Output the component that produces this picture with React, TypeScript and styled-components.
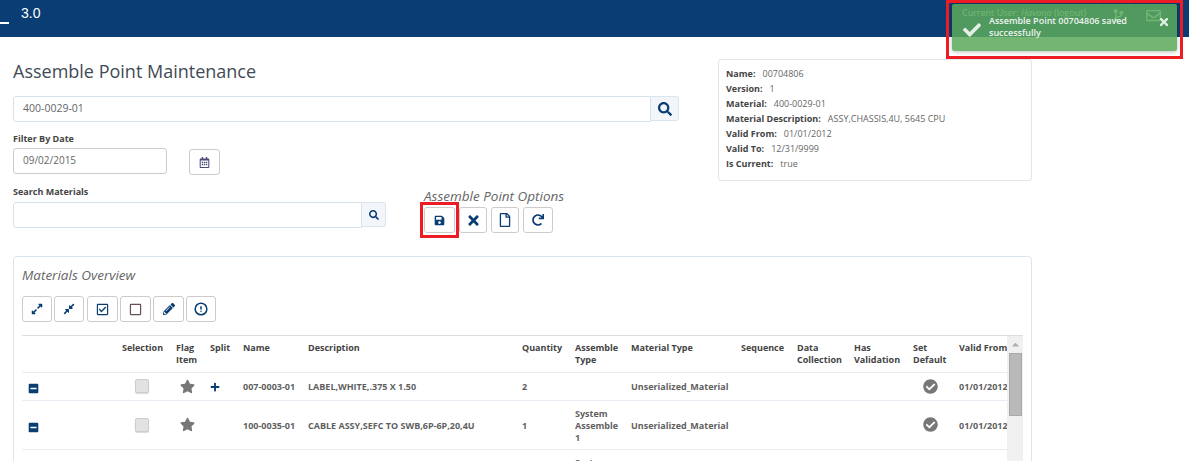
import React from "react"
import styled, { createGlobalStyle } from 'styled-components'
import {
    FaSearch, FaRegCalendarAlt, FaSave, FaTimes, FaRegFile, FaRedo, FaExpandAlt, FaCompressAlt,
    FaRegCheckSquare, FaRegSquare, FaPencilAlt, FaMinusSquare, FaStar, FaPlus, FaCheckCircle,
    FaCheck, FaCodeBranch, FaRegEnvelope, FaCaretUp
} from 'react-icons/fa'
import { FiAlertCircle } from 'react-icons/fi'

const navy = '#0a3d73'

const GlobalStyle = createGlobalStyle`
  html, body {
    margin: 0;
    background: #fff;
    overflow: hidden;
    font-family: "Open Sans", "Liberation Sans", sans-serif;
    color: #555;
  }
`

const Page = styled.div`
  position: relative;
  height: 461px;
  overflow: hidden;
`

const Header = styled.header`
  height: 37px;
  background: ${navy};
  display: flex;
  align-items: flex-start;
`

const MenuBar = styled.span`
  width: 9px;
  height: 2px;
  margin-top: 22px;
  background: #fff;
`

const Version = styled.span`
  margin: 5px 0 0 12px;
  font: 14px/16px "Liberation Sans", sans-serif;
  color: #fff;
`

const UserArea = styled.div`
  margin-left: auto;
  width: 228px;
  height: 30px;
  display: flex;
  align-items: center;
  color: #fff;
  font-size: 9px;
`

const UserName = styled.span`
  width: 141px;
  padding-left: 1px;
  box-sizing: border-box;
  margin-top: -5px;
  white-space: nowrap;
  em { font-style: italic; }
`

const HeaderCell = styled.span<{ $w: number; $size: number }>`
  width: ${p => p.$w}px;
  height: 30px;
  display: flex;
  align-items: center;
  justify-content: center;
  border-left: 1px solid #062c54;
  font-size: ${p => p.$size}px;
`

const Toast = styled.div`
  position: absolute;
  top: 4px;
  left: 952px;
  width: 225px;
  height: 47px;
  box-sizing: border-box;
  padding: 11px 7px 0 11px;
  display: flex;
  align-items: flex-start;
  border-radius: 2px;
  background: rgba(92, 170, 92, 0.86);
  box-shadow: 0 1px 4px rgba(0, 0, 0, 0.25);
  color: #eef4ee;
  font-size: 9px;
  font-weight: 600;
  line-height: 12px;
`

const ToastCheck = styled.span`
  width: 26px;
  margin-top: 6px;
  font-size: 18px;
  line-height: 18px;
  color: #e6efe6;
`

const ToastText = styled.span`
  flex: 1;
`

const ToastClose = styled.span`
  margin-top: 1px;
  font-size: 12px;
  color: #e6efe6;
`

const RedBox = styled.div<{ $left: number; $top: number; $w: number; $h: number }>`
  position: absolute;
  left: ${p => p.$left}px;
  top: ${p => p.$top}px;
  width: ${p => p.$w}px;
  height: ${p => p.$h}px;
  box-sizing: border-box;
  border: 3px solid #ed1c24;
  pointer-events: none;
`

const Top = styled.section`
  display: flex;
  padding: 22px 0 0 13px;
  height: 219px;
  box-sizing: border-box;
`

const LeftColumn = styled.div`
  width: 666px;
`

const Title = styled.h1`
  margin: 0 0 12px;
  height: 25px;
  font-size: 18px;
  line-height: 25px;
  font-weight: 400;
  color: #414b55;
`

const InputRow = styled.div`
  display: flex;
  align-items: flex-start;
`

const TextBox = styled.div<{ $w: number; $grey?: boolean; $size?: number }>`
  width: ${p => p.$w}px;
  height: 26px;
  box-sizing: border-box;
  padding-left: 9px;
  border: 1px solid ${p => (p.$grey ? '#ccc' : '#d5e2ec')};
  border-radius: ${p => (p.$grey ? '3px' : '3px 0 0 3px')};
  background: #fff;
  font-size: ${p => p.$size ?? 10}px;
  line-height: 23px;
  color: #666;
`

const AddOn = styled.button<{ $w: number; $size: number }>`
  width: ${p => p.$w}px;
  height: 25px;
  padding: 0;
  display: flex;
  align-items: center;
  justify-content: center;
  border: 1px solid #dbe5ee;
  border-left: none;
  border-radius: 0 3px 3px 0;
  background: #f2f5fa;
  color: ${navy};
  font-size: ${p => p.$size}px;
`

const FieldLabel = styled.label<{ $mb: number }>`
  display: block;
  height: 12px;
  margin: 11px 0 ${p => p.$mb}px;
  font-size: 9px;
  line-height: 12px;
  font-weight: 700;
  color: #444;
`

const ToolButton = styled.button<{ $w?: number; $size?: number; $color?: string }>`
  width: ${p => p.$w ?? 30}px;
  height: 26px;
  padding: 0;
  display: flex;
  align-items: center;
  justify-content: center;
  border: 1px solid #ccc;
  border-radius: 3px;
  background: #fff;
  color: ${p => p.$color ?? navy};
  font-size: ${p => p.$size ?? 12}px;
`

const CalendarButton = styled(ToolButton)`
  margin: 1px 0 0 22px;
`

const SearchRow = styled.div`
  display: flex;
`

const SearchColumn = styled.div`
  width: 411px;
`

const OptionsColumn = styled.div`
  padding-top: 12px;
`

const SectionTitle = styled.div`
  font-size: 13.5px;
  font-style: italic;
  line-height: 19px;
  color: #666;
`

const OptionTools = styled.div`
  display: flex;
  gap: 4px;
  margin-top: 1px;
`

const InfoCard = styled.aside`
  margin-left: 39px;
  width: 314px;
  height: 122px;
  box-sizing: border-box;
  padding: 6px 7px 0;
  border: 1px solid #dfe6ec;
  border-radius: 3px;
  align-self: flex-start;
  font-size: 9px;
  line-height: 15px;
  color: #666;
`

const InfoRow = styled.div`
  b {
    font-weight: 700;
    color: #444;
    margin-right: 7px;
  }
`

const Panel = styled.section`
  margin-left: 13px;
  width: 1019px;
  height: 240px;
  box-sizing: border-box;
  padding: 9px 8px 0;
  border: 1px solid #dbe5ee;
  border-radius: 4px;
`

const Actions = styled.div`
  display: flex;
  gap: 2.3px;
  margin: 11px 0 13px;
`

const TableWrap = styled.div`
  display: flex;
  border-top: 1px solid #ddd;
`

const Table = styled.table`
  width: 985px;
  table-layout: fixed;
  border-collapse: collapse;
  font-size: 9px;
  line-height: 12px;
  color: #5f5f5f;
`

const Th = styled.th`
  height: 36px;
  box-sizing: border-box;
  padding: 6px 0 0;
  text-align: left;
  vertical-align: top;
  font-weight: 700;
  color: #444;
  border-bottom: 1px solid #e8eef3;
`

// $top moves the cell's content up or down inside the same 12px of padding
const Td = styled.td<{ $indent?: number; $top?: number }>`
  padding: ${p => p.$top ?? 7}px 0 ${p => 12 - (p.$top ?? 7)}px ${p => p.$indent ?? 0}px;
  vertical-align: middle;
  font-weight: 700;
  white-space: pre-line;
  overflow: hidden;
  border-bottom: 1px solid #e8eef3;
`

const RowIcon = styled.span<{ $size: number; $color: string }>`
  display: inline-flex;
  vertical-align: middle;
  font-size: ${p => p.$size}px;
  color: ${p => p.$color};
`

const CheckBox = styled.span`
  display: inline-block;
  width: 14px;
  height: 14px;
  box-sizing: border-box;
  vertical-align: middle;
  border: 1px solid #ccc;
  border-radius: 2px;
  background: #e2e2e2;
  box-shadow: 0 1px 1px rgba(0, 0, 0, 0.15);
`

const ScrollBar = styled.div`
  width: 17px;
  height: 130px;
  background: #f0f0f0;
  display: flex;
  flex-direction: column;
  align-items: center;
`

const ScrollArrow = styled.div`
  height: 17px;
  color: #b0b0b0;
  font-size: 11px;
  display: flex;
  align-items: center;
`

const ScrollThumb = styled.div`
  width: 13px;
  height: 63px;
  box-sizing: border-box;
  background: #b9b9b9;
  border: 1px solid #a9a9a9;
`

const columns = [100, 54, 34, 33, 65, 214, 53, 56, 110, 56, 57, 59, 46, 48]

const headings = ['', 'Selection', 'Flag Item', 'Split', 'Name', 'Description', 'Quantity', 'Assemble Type',
    'Material Type', 'Sequence', 'Data Collection', 'Has Validation', 'Set Default', 'Valid\u00a0From']

const rows = [
    { name: '007-0003-01', description: 'LABEL,WHITE,.375 X 1.50', quantity: '2', type: '', material: 'Unserialized_Material', valid: '01/01/2012', split: true },
    { name: '100-0035-01', description: 'CABLE ASSY,SEFC TO SWB,6P-6P,20,4U', quantity: '1', type: 'System\nAssemble\n1', material: 'Unserialized_Material', valid: '01/01/2012', split: false },
    // only the top of this row's type shows above the fold
    { name: '', description: '', quantity: '', type: 'System\nAssemble\n1', material: '', valid: '', split: false },
]

const info = [
    ['Name:', '00704806'],
    ['Version:', '1'],
    ['Material:', '400-0029-01'],
    ['Material Description:', 'ASSY,CHASSIS,4U, 5645 CPU'],
    ['Valid From:', '01/01/2012'],
    ['Valid To:', '12/31/9999'],
    ['Is Current:', 'true'],
]

const App = () => {
    return (
        <Page>
            <GlobalStyle />
            <Header>
                <MenuBar />
                <Version>3.0</Version>
                <UserArea>
                    <UserName>Current User: <em>Havana</em> (logout)</UserName>
                    <HeaderCell $w={31} $size={13}><FaCodeBranch /></HeaderCell>
                    <HeaderCell $w={36} $size={15}><FaRegEnvelope /></HeaderCell>
                </UserArea>
            </Header>

            <Top>
                <LeftColumn>
                    <Title>Assemble Point Maintenance</Title>
                    <InputRow>
                        <TextBox $w={638} $size={10.5}>400-0029-01</TextBox>
                        <AddOn $w={28} $size={14}><FaSearch /></AddOn>
                    </InputRow>
                    <FieldLabel $mb={3}>Filter By Date</FieldLabel>
                    <InputRow>
                        <TextBox $w={154} $grey>09/02/2015</TextBox>
                        <CalendarButton $w={31} $size={11} $color="#4a4a7a"><FaRegCalendarAlt /></CalendarButton>
                    </InputRow>
                    <SearchRow>
                        <SearchColumn>
                            <FieldLabel $mb={4}>Search Materials</FieldLabel>
                            <InputRow>
                                <TextBox $w={349} />
                                <AddOn $w={24} $size={10}><FaSearch /></AddOn>
                            </InputRow>
                        </SearchColumn>
                        <OptionsColumn>
                            <SectionTitle>Assemble Point Options</SectionTitle>
                            <OptionTools>
                                <ToolButton $w={31} $size={11}><FaSave /></ToolButton>
                                <ToolButton $w={28} $size={15}><FaTimes /></ToolButton>
                                <ToolButton $w={28} $size={14}><FaRegFile /></ToolButton>
                                <ToolButton $w={30} $size={12}><FaRedo /></ToolButton>
                            </OptionTools>
                        </OptionsColumn>
                    </SearchRow>
                </LeftColumn>
                <InfoCard>
                    {info.map(([label, value]) => (
                        <InfoRow key={label}><b>{label}</b>{value}</InfoRow>
                    ))}
                </InfoCard>
            </Top>

            <Panel>
                <SectionTitle>Materials Overview</SectionTitle>
                <Actions>
                    <ToolButton $size={12}><FaExpandAlt /></ToolButton>
                    <ToolButton $size={12}><FaCompressAlt /></ToolButton>
                    <ToolButton $w={31} $size={13}><FaRegCheckSquare /></ToolButton>
                    <ToolButton $w={31} $size={13} $color="#6a4f55"><FaRegSquare /></ToolButton>
                    <ToolButton $w={31} $size={12}><FaPencilAlt /></ToolButton>
                    <ToolButton $size={14}><FiAlertCircle strokeWidth={2.6} /></ToolButton>
                </Actions>
                <TableWrap>
                    <Table>
                        <colgroup>
                            {columns.map((w, i) => <col key={i} width={w} />)}
                        </colgroup>
                        <thead>
                            <tr>
                                {headings.map((h, i) => <Th key={i}>{h}</Th>)}
                            </tr>
                        </thead>
                        <tbody>
                            {rows.map((row, i) => (
                                <tr key={i}>
                                    <Td $indent={6} $top={8}><RowIcon $size={11} $color={navy}><FaMinusSquare /></RowIcon></Td>
                                    <Td $indent={13} $top={6}><CheckBox /></Td>
                                    <Td $indent={4} $top={6}><RowIcon $size={15} $color="#777"><FaStar /></RowIcon></Td>
                                    <Td $top={6}>{row.split && <RowIcon $size={10} $color={navy}><FaPlus /></RowIcon>}</Td>
                                    <Td>{row.name}</Td>
                                    <Td>{row.description}</Td>
                                    <Td>{row.quantity}</Td>
                                    <Td>{row.type}</Td>
                                    <Td>{row.material}</Td>
                                    <Td />
                                    <Td />
                                    <Td />
                                    <Td $indent={10} $top={6}><RowIcon $size={15} $color="#777"><FaCheckCircle /></RowIcon></Td>
                                    <Td>{row.valid}</Td>
                                </tr>
                            ))}
                        </tbody>
                    </Table>
                    <ScrollBar>
                        <ScrollArrow><FaCaretUp /></ScrollArrow>
                        <ScrollThumb />
                    </ScrollBar>
                </TableWrap>
            </Panel>

            <Toast>
                <ToastCheck><FaCheck /></ToastCheck>
                <ToastText>Assemble Point 00704806 saved successfully</ToastText>
                <ToastClose><FaTimes /></ToastClose>
            </Toast>
            <RedBox $left={946} $top={0} $w={237} $h={59} />
            <RedBox $left={420} $top={202} $w={39} $h={36} />
        </Page>
    )
}

export default App
